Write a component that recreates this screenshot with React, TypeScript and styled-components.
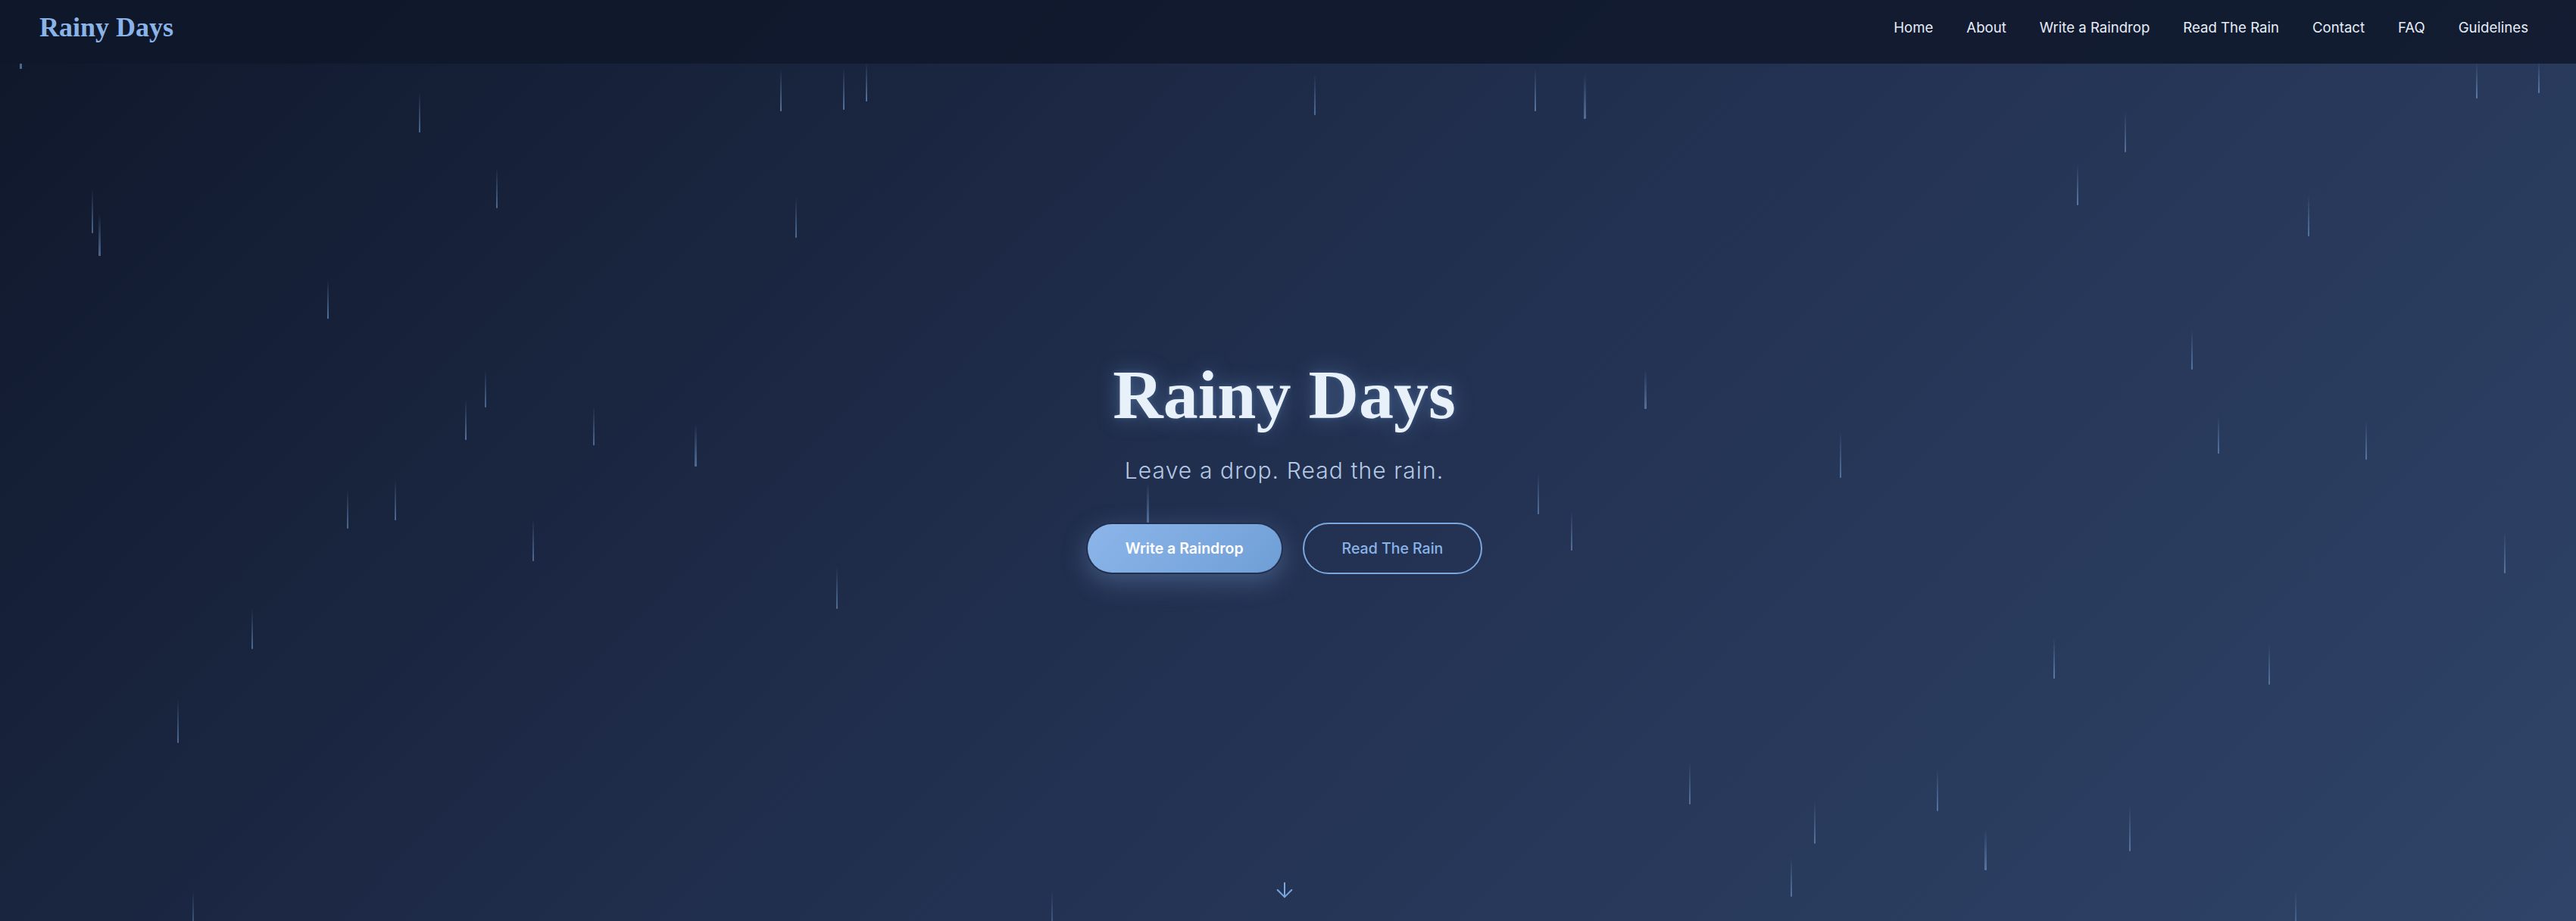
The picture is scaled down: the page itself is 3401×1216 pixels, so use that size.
import styled, { createGlobalStyle } from 'styled-components'
import { ArrowDown } from 'lucide-react'

const GlobalStyle = createGlobalStyle`
    html, body {
        margin: 0;
        padding: 0;
        background: #0f172a;
    }
    body {
        font-family: Inter, "Noto Sans", sans-serif;
        -webkit-font-smoothing: antialiased;
    }
    * {
        box-sizing: border-box;
    }
`

const colors = {
    ink: '#0f172a',
    sky: '#8ab4e8',
    skyDeep: '#7aa7dd',
    mist: '#e8f0fa',
    fog: '#b4c8e4',
    nav: '#e6edf7',
}

// reference is 1568 wide, real page 3401
const SCALE = 3401 / 1568
const HEADER_H = 84

export const PageStyled = styled.div`
    min-height: 100vh;
    display: flex;
    flex-direction: column;
    background: linear-gradient(135deg, #0f172a 0%, #223050 50%, #2f4468 100%);
    overflow: hidden;
`

export const HeaderStyled = styled.header`
    height: ${HEADER_H}px;
    flex-shrink: 0;
    display: flex;
    align-items: center;
    justify-content: space-between;
    padding: 0 63px 12px 52px;
    background: rgba(15, 23, 42, 0.85);
    position: relative;
    z-index: 2;
`

export const LogoStyled = styled.a`
    font-family: "Liberation Serif", "DejaVu Serif", serif;
    font-weight: 700;
    font-size: 36px;
    color: ${colors.sky};
    text-decoration: none;
`

export const NavStyled = styled.nav`
    display: flex;
    align-items: center;
    gap: 44px;

    a {
        font-size: 18.6px;
        font-weight: 400;
        color: ${colors.nav};
        text-decoration: none;
    }
`

export const HeroStyled = styled.section`
    flex: 1;
    position: relative;
    display: flex;
    flex-direction: column;
    align-items: center;
    padding-right: 10px;
`

export const RainLayer = styled.div`
    position: absolute;
    inset: 0;
    overflow: hidden;
    pointer-events: none;
`

export const DropStyled = styled.span<{ $wide?: boolean }>`
    position: absolute;
    width: ${({ $wide }) => ($wide ? 3 : 2)}px;
    border-radius: 1px;
    background: linear-gradient(to bottom, rgba(122, 167, 221, 0), rgba(122, 167, 221, 0.6));
`

export const HeroContent = styled.div`
    flex: 1;
    display: flex;
    flex-direction: column;
    align-items: center;
    justify-content: center;
    padding-bottom: 14px;
    position: relative;
    z-index: 1;
`

export const TitleStyled = styled.h1`
    margin: 0;
    font-family: "Liberation Serif", "DejaVu Serif", serif;
    font-weight: 700;
    font-size: 92px;
    line-height: 1.1;
    color: ${colors.mist};
    text-shadow: 0 0 28px rgba(122, 167, 221, 0.45), 0 0 6px rgba(122, 167, 221, 0.25);
`

export const TaglineStyled = styled.p`
    margin: 26px 0 0;
    font-size: 30px;
    font-weight: 300;
    line-height: 1.5;
    letter-spacing: 1.1px;
    color: ${colors.fog};
`

export const ButtonRow = styled.div`
    margin-top: 46px;
    display: flex;
    gap: 26px;
`

export const ButtonStyled = styled.a<{ $primary?: boolean }>`
    height: 68px;
    display: inline-flex;
    align-items: center;
    justify-content: center;
    padding: 0 50px;
    border-radius: 34px;
    font-size: 19.5px;
    text-decoration: none;
    border: 2px solid ${({ $primary }) => ($primary ? 'transparent' : colors.skyDeep)};
    font-weight: ${({ $primary }) => ($primary ? 600 : 500)};
    color: ${({ $primary }) => ($primary ? '#ffffff' : colors.sky)};
    background: ${({ $primary }) =>
        $primary ? 'linear-gradient(135deg, #8cb6ea 0%, #6f9ed6 100%) padding-box' : 'transparent'};
    box-shadow: ${({ $primary }) => ($primary ? '0 10px 32px rgba(122, 167, 221, 0.35)' : 'none')};
`

export const ScrollHint = styled.div`
    padding-bottom: 25px;
    color: ${colors.skyDeep};
    display: flex;
    position: relative;
    z-index: 1;
`

// [x, yBottom, length, opacity] in reference (shrunk) units
const drops: [number, number, number, number][] = [
    [12, 42, 26, 0.7], [255, 81, 25, 0.6], [475, 68, 26, 0.7], [513, 67, 26, 0.7],
    [527, 62, 24, 0.7], [800, 70, 25, 0.6], [934, 68, 26, 0.7], [964, 72, 27, 0.6],
    [1507, 60, 22, 0.7], [1545, 57, 20, 0.8], [1293, 93, 25, 0.6], [1264, 125, 25, 0.7],
    [1405, 144, 26, 0.6], [56, 142, 27, 0.6], [60, 156, 26, 0.6], [302, 127, 25, 0.6],
    [484, 145, 25, 0.6], [199, 194, 24, 0.7], [295, 248, 23, 0.6], [283, 268, 25, 0.7],
    [361, 271, 24, 0.6], [423, 284, 26, 0.6], [211, 322, 24, 0.6], [240, 317, 25, 0.6],
    [324, 342, 26, 0.6], [509, 371, 26, 0.6], [153, 395, 25, 0.6], [108, 452, 27, 0.6],
    [1001, 249, 24, 0.6], [1120, 291, 28, 0.6], [1334, 225, 25, 0.6], [1350, 276, 23, 0.6],
    [1440, 280, 24, 0.6], [936, 313, 25, 0.6], [956, 335, 24, 0.6], [698, 318, 24, 0.6],
    [1524, 349, 26, 0.6], [1250, 413, 25, 0.7], [1381, 417, 25, 0.6], [1028, 490, 26, 0.6],
    [1104, 514, 26, 0.6], [1179, 494, 26, 0.6], [1208, 530, 25, 0.6], [1296, 518, 28, 0.6],
    [1090, 546, 24, 0.6], [117, 570, 28, 0.6], [640, 572, 30, 0.6], [1397, 572, 30, 0.6],
]

const navLinks = ['Home', 'About', 'Write a Raindrop', 'Read The Rain', 'Contact', 'FAQ', 'Guidelines']

export default function App() {
    return (
        <>
            <GlobalStyle />
            <PageStyled>
                <HeaderStyled>
                    <LogoStyled href="#">Rainy Days</LogoStyled>
                    <NavStyled>
                        {navLinks.map((l) => (
                            <a key={l} href="#">{l}</a>
                        ))}
                    </NavStyled>
                </HeaderStyled>

                <HeroStyled>
                    <RainLayer>
                        {drops.map(([x, yb, len, op], i) => (
                            <DropStyled
                                key={i}
                                $wide={i % 7 === 0}
                                style={{
                                    left: Math.round(x * SCALE),
                                    top: Math.round((yb - len) * SCALE) - HEADER_H,
                                    height: Math.round(len * SCALE),
                                    opacity: op + 0.3,
                                }}
                            />
                        ))}
                    </RainLayer>

                    <HeroContent>
                        <TitleStyled>Rainy Days</TitleStyled>
                        <TaglineStyled>Leave a drop. Read the rain.</TaglineStyled>
                        <ButtonRow>
                            <ButtonStyled $primary href="#">Write a Raindrop</ButtonStyled>
                            <ButtonStyled href="#">Read The Rain</ButtonStyled>
                        </ButtonRow>
                    </HeroContent>

                    <ScrollHint>
                        <ArrowDown size={32} strokeWidth={1.5} />
                    </ScrollHint>
                </HeroStyled>
            </PageStyled>
        </>
    )
}
